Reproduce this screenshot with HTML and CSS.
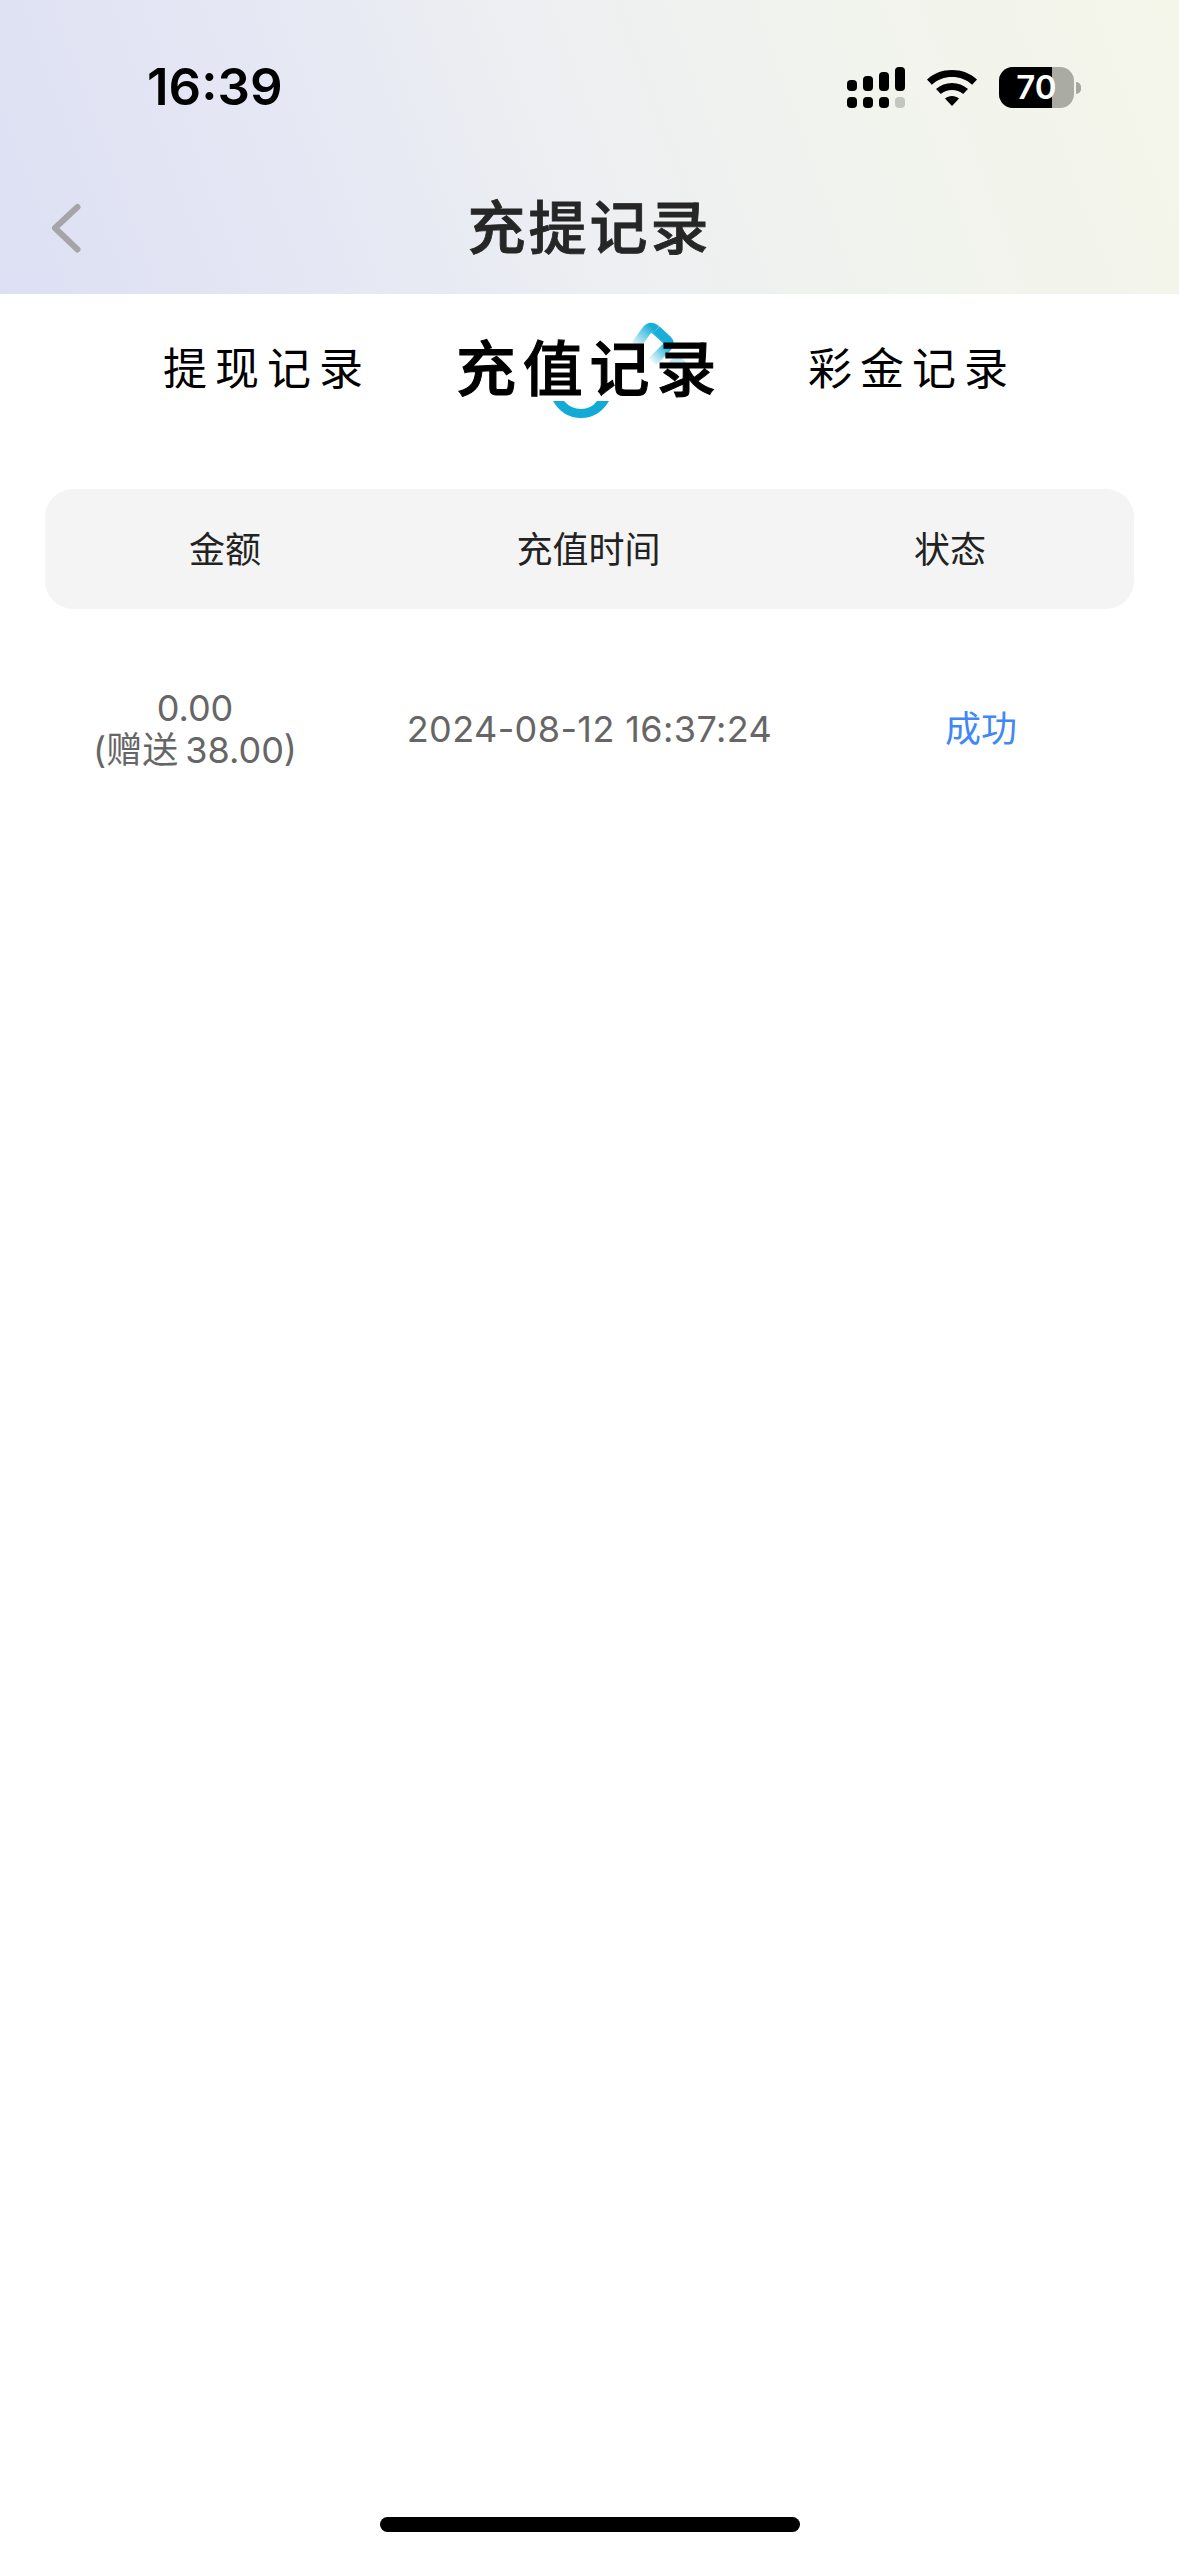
FILE: index.html
```html
<!DOCTYPE html>
<html lang="zh-CN">
<head>
    <meta charset="UTF-8">
    <meta name="viewport" content="width=device-width, initial-scale=1.0">
    <title>充提记录</title>
    <link rel="stylesheet" href="styles.css">
</head>
<body>
    <div class="page">
        <header class="top">
            <div class="status-bar">
                <span class="clock">16:39</span>
                <div class="status-icons">
                    <svg class="signal" width="58" height="41" viewBox="0 0 58 41">
                        <rect x="0" y="13" width="10" height="11" rx="4"/>
                        <rect x="16" y="9" width="10" height="15" rx="4"/>
                        <rect x="32" y="5" width="10" height="19" rx="4"/>
                        <rect x="48" y="0" width="10" height="24" rx="4"/>
                        <rect x="0" y="30" width="10" height="11" rx="4"/>
                        <rect x="16" y="30" width="10" height="11" rx="4"/>
                        <rect x="32" y="30" width="10" height="11" rx="4"/>
                        <rect x="48" y="30" width="10" height="11" rx="4" fill="#c4c5bf"/>
                    </svg>
                    <svg class="wifi" width="52" height="38" viewBox="0 0 52 38">
                        <path d="M1 10.500C8 4 16.500 1 26 1s18 3 25 9.500l-4.800 5.200C40.500 10.500 33.500 8 26 8S11.500 10.500 5.800 15.700z"/>
                        <path d="M10 20C14.500 16 20 14 26 14s11.500 2 16 6l-4.800 5C34 22.300 30.200 21 26 21s-8 1.300-11.200 4z"/>
                        <path d="M19 29.500c2-1.600 4.400-2.500 7-2.500s5 .9 7 2.500L26 37z"/>
                    </svg>
                    <div class="battery">
                        <div class="battery-body">
                            <div class="battery-fill"></div>
                            <span class="battery-num">70</span>
                        </div>
                        <div class="battery-tip"></div>
                    </div>
                </div>
            </div>
            <div class="nav-bar">
                <svg class="back" width="32" height="52" viewBox="0 0 32 52">
                    <path d="M27.500 5 5 26 27.500 47.500" fill="none" stroke="#a5a5a7" stroke-width="6" stroke-linecap="round" stroke-linejoin="round"/>
                </svg>
                <h1 class="nav-title">充提记录</h1>
            </div>
        </header>

        <nav class="tabs">
            <span class="tab">提现记录</span>
            <span class="tab active">
                <svg class="tab-mark" width="145" height="100" viewBox="0 0 145 100">
                    <defs>
                        <linearGradient id="markLeft" gradientUnits="userSpaceOnUse" x1="88" y1="28" x2="108" y2="8">
                            <stop offset="0" stop-color="#ffffff"/>
                            <stop offset="1" stop-color="#18aed8"/>
                        </linearGradient>
                        <linearGradient id="markRight" gradientUnits="userSpaceOnUse" x1="122" y1="24" x2="105" y2="42">
                            <stop offset="0" stop-color="#18aed8"/>
                            <stop offset="1" stop-color="#ffffff"/>
                        </linearGradient>
                    </defs>
                    <path d="M90 24 101 9Q105 5 110 9" fill="none" stroke="url(#markLeft)" stroke-width="10"/>
                    <path d="M110 9 121 19Q124 22 121 26L106 41" fill="none" stroke="url(#markRight)" stroke-width="10"/>
                    <path d="M125 43Q131 36 138 43" fill="none" stroke="#c3e8f3" stroke-width="6"/>
                    <path d="M7 80Q17 97 35 97T63 80H51Q45 88 35 88T18 80z" fill="#12abd6"/>
                </svg>
                <span class="tab-text">充值记录</span>
            </span>
            <span class="tab">彩金记录</span>
        </nav>

        <section class="record-table">
            <div class="table-head">
                <span class="col">金额</span>
                <span class="col col-time">充值时间</span>
                <span class="col col-state">状态</span>
            </div>
            <div class="table-row">
                <div class="cell cell-amount">
                    <div>0.00</div>
                    <div class="gift">(赠送 38.00)</div>
                </div>
                <div class="cell cell-time">2024-08-12 16:37:24</div>
                <div class="cell cell-state">成功</div>
            </div>
        </section>

        <div class="home-bar"></div>
    </div>
</body>
</html>
```

FILE: styles.css
```css
* {
    box-sizing: border-box;
}
html, body {
    margin: 0;
    padding: 0;
    background-color: #fff;
}
body {
    font-family: Inter, "Noto Sans CJK SC", sans-serif;
}
.page {
    position: relative;
    width: 1179px;
    height: 2556px;
    overflow: hidden;
}
.top {
    height: 294px;
    background: linear-gradient(70deg, #dde0f3 0%, #e5e7f4 26%, #edeff2 48%, #f1f3ee 70%, #f4f6ea 100%);
}
.status-bar {
    height: 174px;
    display: flex;
    align-items: flex-start;
    justify-content: space-between;
    padding: 57px 98px 0 147px;
}
.clock {
    font-size: 51px;
    font-weight: 600;
    line-height: 60px;
    color: #000;
}
.status-icons {
    display: flex;
    align-items: center;
    gap: 21px;
    padding-top: 10px;
}
.signal, .wifi {
    fill: #000;
    display: block;
}
.battery {
    display: flex;
    align-items: center;
    gap: 2px;
}
.battery-body {
    position: relative;
    width: 75px;
    height: 41px;
    border-radius: 14px;
    background-color: #aaaba3;
    overflow: hidden;
    display: flex;
    align-items: center;
    justify-content: center;
}
.battery-fill {
    position: absolute;
    left: 0;
    top: 0;
    bottom: 0;
    width: 53px;
    background-color: #000;
}
.battery-num {
    position: relative;
    font-size: 33px;
    font-weight: 600;
    color: #fff;
    line-height: 41px;
}
.battery-tip {
    width: 5px;
    height: 12px;
    background-color: #a5a69e;
    border-radius: 0 6px 6px 0;
}
.nav-bar {
    position: relative;
    height: 120px;
    display: flex;
    align-items: flex-start;
    justify-content: center;
}
.back {
    position: absolute;
    left: 50px;
    top: 28px;
}
.nav-title {
    margin: 0;
    font-size: 58px;
    font-weight: 500;
    -webkit-text-stroke: 0.800px #262626;
    line-height: 108px;
    letter-spacing: 3px;
    color: #262626;
}
.tabs {
    display: flex;
    align-items: center;
    justify-content: center;
    gap: 85px;
    height: 150px;
}
.tab {
    font-size: 44px;
    letter-spacing: 8px;
    color: #000;
    line-height: 60px;
}
.tab.active {
    position: relative;
    font-size: 60px;
    font-weight: 500;
    -webkit-text-stroke: 1px #000;
    letter-spacing: 6.700px;
}
.tab-text {
    position: relative;
}
.tab-mark {
    position: absolute;
    left: 90px;
    top: -18px;
}
.record-table {
    padding: 0 45px;
    margin-top: 45px;
}
.table-head {
    display: grid;
    grid-template-columns: 360px 1fr 360px;
    align-items: center;
    height: 120px;
    padding-bottom: 5px;
    background-color: #f4f4f4;
    border-radius: 28px;
    text-align: center;
}
.col {
    font-size: 36px;
    color: #222;
}
.col-time {
    padding-right: 2px;
}
.col-state {
    padding-right: 8px;
}
.table-row {
    display: grid;
    grid-template-columns: 360px 1fr 360px;
    align-items: center;
    height: 120px;
    margin-top: 60px;
    text-align: center;
    font-size: 36px;
    line-height: 42px;
    color: #666;
}
.cell-amount {
    padding-right: 60px;
}
.gift {
    word-spacing: -3px;
}
.cell-time {
    letter-spacing: 0.400px;
}
.cell-state {
    color: #3f88f5;
    padding-left: 54px;
}
.home-bar {
    position: absolute;
    left: 380px;
    bottom: 24px;
    width: 420px;
    height: 15px;
    border-radius: 8px;
    background-color: #000;
}
```
